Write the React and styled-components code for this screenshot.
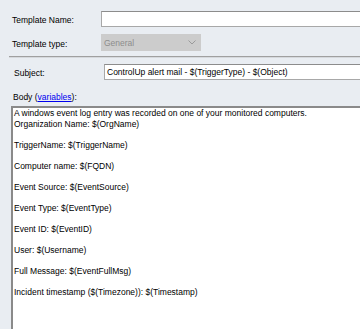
import React from 'react';
import styled, { createGlobalStyle } from 'styled-components';

const GlobalStyle = createGlobalStyle`
  html, body {
    margin: 0;
    padding: 0;
    background: #e9edf2;
    overflow: hidden;
  }
  body {
    font-family: "Liberation Sans", Arial, sans-serif;
    font-size: 8.5px;
    color: #000;
  }
`;

const Page = styled.div`
  width: 360px;
  height: 329px;
  overflow: hidden;
  background: #e9edf2;
`;

const Header = styled.div`
  padding: 11px 0 0 12px;
  display: flex;
  flex-direction: column;
  gap: 7px;
`;

const Row = styled.div`
  display: flex;
  align-items: center;
`;

const Label = styled.div`
  width: ${props => props.width || 89}px;
  flex-shrink: 0;
  padding-top: 2px;
`;

const TextInput = styled.div`
  height: 14px;
  width: 280px;
  flex-shrink: 0;
  background: #fff;
  border: 1px solid #a8a8a8;
  border-top-color: #8c8c8c;
  padding-left: 2px;
  display: flex;
  align-items: center;
  white-space: nowrap;
  overflow: hidden;
`;

const Select = styled.div`
  width: 92px;
  height: 17px;
  background: #cccccc;
  color: #8c8c8c;
  padding-left: 3px;
  padding-right: 5px;
  display: flex;
  align-items: center;
  justify-content: space-between;
  box-sizing: content-box;
`;

const Separator = styled.div`
  margin: 5px 0 0 9px;
  border-top: 1px solid #a0a0a0;
  border-bottom: 1px solid #d6d9dd;
`;

const Section = styled.div`
  padding: 6px 0 0 14px;
`;

const BodyLabel = styled.div`
  padding: 12px 0 0 13px;
`;

const Link = styled.a`
  color: #0000ee;
  text-decoration: underline;
`;

const BodyBox = styled.div`
  margin: 4px 0 0 11px;
  height: 240px;
  background: #fff;
  border-top: 2px solid #8a8a8a;
  border-left: 2px solid #8a8a8a;
  padding: 0 0 0 1px;
  line-height: 10.5px;
  white-space: pre;
`;

const Chevron = () => (
  <svg width="8" height="5" viewBox="0 0 8 5">
    <path d="M0.5 0.5 L4 4 L7.5 0.5" fill="none" stroke="#9a9a9a" strokeWidth="1" />
  </svg>
);

const bodyLines = [
  'A windows event log entry was recorded on one of your monitored computers.',
  'Organization Name: $(OrgName)',
  '',
  'TriggerName: $(TriggerName)',
  '',
  'Computer name: $(FQDN)',
  '',
  'Event Source: $(EventSource)',
  '',
  'Event Type: $(EventType)',
  '',
  'Event ID: $(EventID)',
  '',
  'User: $(Username)',
  '',
  'Full Message: $(EventFullMsg)',
  '',
  'Incident timestamp ($(Timezone)): $(Timestamp)'
];

export default function App() {
  return (
    <Page>
      <GlobalStyle />
      <Header>
        <Row>
          <Label>Template Name:</Label>
          <TextInput />
        </Row>
        <Row>
          <Label>Template type:</Label>
          <Select>
            General
            <Chevron />
          </Select>
        </Row>
      </Header>
      <Separator />
      <Section>
        <Row>
          <Label width={90}>Subject:</Label>
          <TextInput>ControlUp alert mail - $(TriggerType) - $(Object)</TextInput>
        </Row>
      </Section>
      <BodyLabel>
        Body (<Link>variables</Link>):
      </BodyLabel>
      <BodyBox>{bodyLines.join('\n')}</BodyBox>
    </Page>
  );
}
